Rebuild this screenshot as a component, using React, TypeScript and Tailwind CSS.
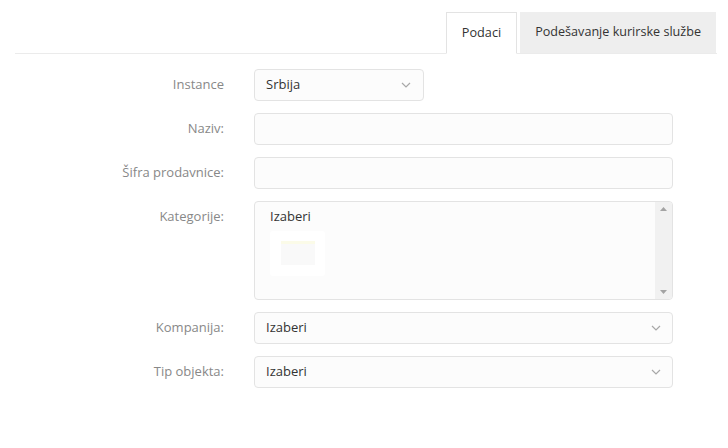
import * as React from "react";

const fieldBase =
  "h-8 rounded-[4px] border border-[#e3e3e3] bg-[#fcfcfc] text-[13px] text-[#333]";

function Chevron() {
  return (
    <svg width="10" height="6" viewBox="0 0 10 6" className="shrink-0">
      <path d="M1 1l4 4 4-4" fill="none" stroke="#a8a8a8" strokeWidth="1.2" />
    </svg>
  );
}

function Row({
  label,
  top = false,
  children,
}: {
  label: string;
  top?: boolean;
  children: React.ReactNode;
}) {
  return (
    <div className={`flex ${top ? "items-start" : "items-center"}`}>
      <div
        className={`w-[239px] shrink-0 pr-[30px] text-right text-[13px] text-[#888] ${
          top ? "pt-[6px]" : ""
        }`}
      >
        {label}
      </div>
      {children}
    </div>
  );
}

export default function App() {
  return (
    <div
      className="h-[448px] w-[728px] bg-white"
      style={{ fontFamily: '"Open Sans", "Liberation Sans", sans-serif' }}
    >
      <div className="ml-[15px] w-[702px] pt-[12px]">
        {/* Tabs */}
        <div className="flex justify-end gap-[3px] border-b border-[#ebebeb] pr-px">
          <div className="-mb-px flex h-[42px] items-center border border-b-white border-[#e3e3e3] bg-white px-[15px] text-[12.7px] text-[#333]">
            Podaci
          </div>
          <div className="flex h-[41px] items-center bg-[#eeeeee] px-[15px] text-[12.6px] text-[#333]">
            Podešavanje kurirske službe
          </div>
        </div>

        {/* Form */}
        <div className="mt-[15px] flex flex-col gap-[12px]">
          <Row label="Instance">
            <div className={`${fieldBase} flex w-[170px] items-center justify-between pl-[11px] pr-[12px]`}>
              <span>Srbija</span>
              <Chevron />
            </div>
          </Row>
          <Row label="Naziv:">
            <div className={`${fieldBase} w-[419px]`} />
          </Row>
          <Row label="Šifra prodavnice:">
            <div className={`${fieldBase} w-[419px]`} />
          </Row>
          <Row label="Kategorije:" top>
            <div className="flex h-[99px] w-[419px] overflow-hidden rounded-[4px] border border-[#e3e3e3] bg-[#fcfcfc]">
              <div className="flex-1 pl-[15px] pt-[5px]">
                <div className="text-[13px] text-[#333]">Izaberi</div>
                <div className="mt-[4px] flex h-[45px] w-[55px] items-center justify-center rounded-[3px] bg-white">
                  <div className="h-[24px] w-[34px] border-t-[3px] border-[#fbfbe8] bg-[#f9f9f9]" />
                </div>
              </div>
              <div className="flex w-[17px] flex-col items-center justify-between bg-[#f1f1f1] py-[5px]">
                <svg width="7" height="4" viewBox="0 0 7 4">
                  <path d="M0 4L3.5 0 7 4z" fill="#a3a3a3" />
                </svg>
                <svg width="7" height="4" viewBox="0 0 7 4">
                  <path d="M0 0L3.5 4 7 0z" fill="#a3a3a3" />
                </svg>
              </div>
            </div>
          </Row>
          <Row label="Kompanija:">
            <div className={`${fieldBase} flex w-[419px] items-center justify-between pl-[11px] pr-[11px]`}>
              <span>Izaberi</span>
              <Chevron />
            </div>
          </Row>
          <Row label="Tip objekta:">
            <div className={`${fieldBase} flex w-[419px] items-center justify-between pl-[11px] pr-[11px]`}>
              <span>Izaberi</span>
              <Chevron />
            </div>
          </Row>
        </div>
      </div>
    </div>
  );
}
